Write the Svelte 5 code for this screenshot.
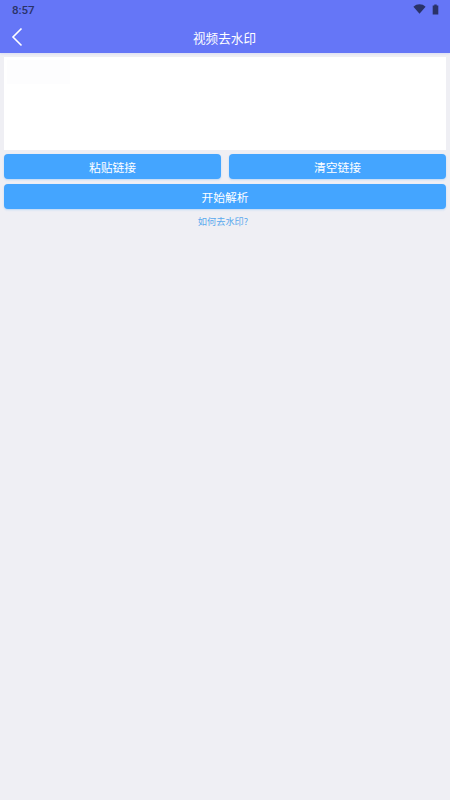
<script>
	let link = $state('');
</script>

<div class="page">
	<header class="topbar">
		<div class="status">
			<span class="time">8:57</span>
			<div class="status-icons">
				<svg width="13" height="10" viewBox="0 0 14 11"><path d="M0.3 3 C4 -0.6 10 -0.6 13.7 3 L7 10.6 Z" fill="#2a3268" /></svg>
				<svg width="7" height="11" viewBox="0 0 7 11"><path d="M2.3 0.5 H4.7 V1.5 H6.3 V10.5 H0.7 V1.5 H2.3 Z" fill="#2a3268" /></svg>
			</div>
		</div>
		<div class="nav">
			<button class="back" aria-label="返回">
				<svg width="12" height="20" viewBox="0 0 12 20"><path d="M10.5 1.5 L2 10 L10.5 18.5" fill="none" stroke="#fff" stroke-width="1.6" /></svg>
			</button>
			<span class="title">视频去水印</span>
		</div>
	</header>

	<main class="content">
		<div class="input-card">
			<div class="placeholder"></div>
			<textarea bind:value={link} aria-label="链接"></textarea>
		</div>
		<div class="row">
			<button class="action">粘贴链接</button>
			<button class="action">清空链接</button>
		</div>
		<button class="action">开始解析</button>
		<a class="help" href="#help">如何去水印?</a>
	</main>
</div>

<style>
	:global(body) {
		margin: 0;
		background: #efeff4;
	}
	.page {
		min-height: 800px;
		background: #efeff4;
		font-family: "Noto Sans CJK SC", "Liberation Sans", sans-serif;
	}
	.topbar {
		height: 53px;
		background: #6576f7;
		display: flex;
		flex-direction: column;
		box-shadow: 0 1px 2px rgba(101, 118, 247, 0.15);
	}
	.status {
		height: 20px;
		display: flex;
		align-items: center;
		justify-content: space-between;
		padding: 0 11px 0 12px;
	}
	.time {
		font-family: Roboto, "Liberation Sans", sans-serif;
		font-size: 11.5px;
		font-weight: 500;
		color: #2a3268;
	}
	.status-icons {
		display: flex;
		align-items: center;
		gap: 6px;
		margin-top: -2px;
	}
	.nav {
		flex: 1;
		position: relative;
		display: flex;
		align-items: center;
		justify-content: center;
	}
	.back {
		position: absolute;
		left: 11px;
		top: 7px;
		padding: 0;
		border: none;
		background: none;
		display: flex;
	}
	.title {
		color: #fff;
		font-size: 12.6px;
		margin-top: 2px;
		margin-left: -1px;
	}
	.content {
		padding: 4px 4px 0;
		display: flex;
		flex-direction: column;
		gap: 5px;
	}
	.input-card {
		height: 93px;
		background: #fff;
		position: relative;
		margin-bottom: -1px;
	}
	.placeholder {
		position: absolute;
		left: 3px;
		top: 3px;
		width: 63px;
		height: 24px;
		background: #fdfdfe;
	}
	textarea {
		position: absolute;
		inset: 0;
		width: 100%;
		height: 100%;
		box-sizing: border-box;
		border: none;
		outline: none;
		resize: none;
		background: transparent;
	}
	.row {
		display: flex;
		gap: 8px;
	}
	.row .action {
		flex: 1;
	}
	.action {
		height: 25px;
		padding: 0;
		border: none;
		border-radius: 4px;
		background: #44a5ff;
		color: #fff;
		font-family: inherit;
		font-size: 11.8px;
		box-shadow: 0 1px 2px rgba(68, 165, 255, 0.3);
	}
	.help {
		text-align: center;
		color: #5aa9ee;
		font-size: 9.2px;
		text-decoration: none;
		margin-right: 4px;
	}
</style>
